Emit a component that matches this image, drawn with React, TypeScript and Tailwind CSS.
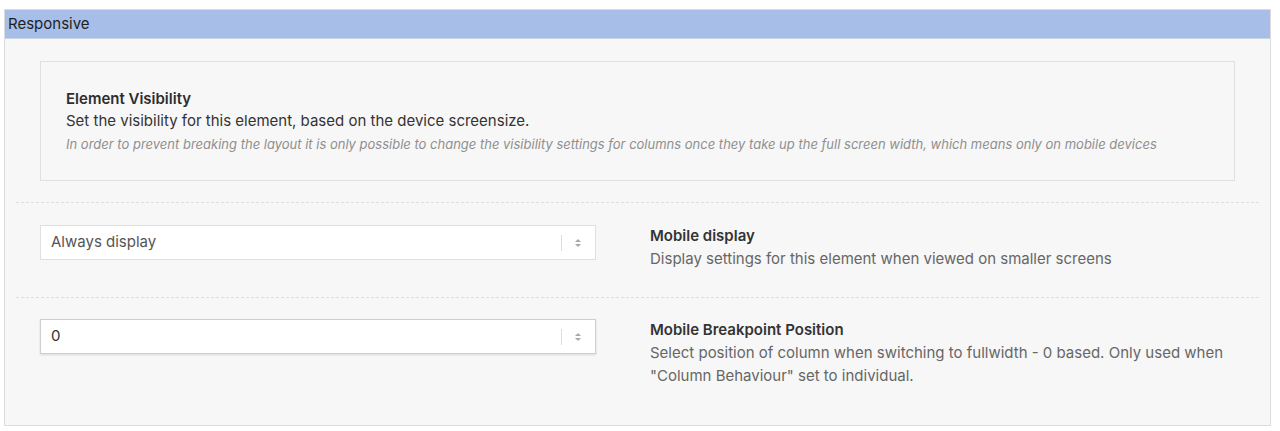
import React from "react";

function Arrows() {
  return (
    <div className="flex items-center h-full">
      <div className="w-px h-[16px] bg-[#dcdcdc]" />
      <svg width="8" height="12" viewBox="0 0 8 12" className="ml-[12px] mr-[13px]">
        <path d="M1 5 L4 2 L7 5 Z" fill="#a8a8a8" />
        <path d="M1 7 L4 10 L7 7 Z" fill="#a8a8a8" />
      </svg>
    </div>
  );
}

export default function App() {
  return (
    <div className="w-[1280px] h-[431px] bg-white pt-[9px] px-[4px]" style={{ fontFamily: 'Inter, "Open Sans", Arial, sans-serif' }}>
      <div className="w-[1267px] border border-[#dcdcdc] bg-[#f7f7f7]">
        <div className="h-[29px] bg-[#a7bfe8] flex items-center pl-[3px] text-[15px] text-[#1e1e1e] border-b border-[#c9d4e4]">
          Responsive
        </div>
        <div className="px-[11px] pt-[22px] pb-[14px]">
          <div className="mx-[24px] border border-[#e0e0e0] h-[120px] pl-[25px] pt-[26px]">
            <div className="text-[15px] font-semibold text-[#2e2e2e] leading-[22px]">Element Visibility</div>
            <div className="text-[15px] text-[#333] leading-[22px]">Set the visibility for this element, based on the device screensize.</div>
            <div className="text-[13px] italic text-[#8f8f8f] leading-[24px]">
              In order to prevent breaking the layout it is only possible to change the visibility settings for columns once they take up the full screen width, which means only on mobile devices
            </div>
          </div>
          <div className="mt-[21px] border-t border-dashed border-[#dedede]" />
          <div className="flex items-start h-[94px] pt-[22px]">
            <div className="ml-[24px] w-[556px] h-[35px] bg-white border border-[#e0e0e0] flex items-center justify-between">
              <span className="pl-[10px] text-[15px] text-[#555]">Always display</span>
              <Arrows />
            </div>
            <div className="ml-[54px]">
              <div className="text-[15px] font-semibold text-[#333] leading-[22px]">Mobile display</div>
              <div className="text-[15px] text-[#666] leading-[23px]">Display settings for this element when viewed on smaller screens</div>
            </div>
          </div>
          <div className="border-t border-dashed border-[#dedede]" />
          <div className="flex items-start pt-[21px] pb-[24px]">
            <div className="ml-[24px] w-[556px] h-[35px] bg-white border border-[#cfcfcf] shadow-[0_1px_2px_rgba(0,0,0,0.12)] flex items-center justify-between">
              <span className="pl-[10px] text-[15px] text-[#333]">0</span>
              <Arrows />
            </div>
            <div className="ml-[54px] w-[590px]">
              <div className="text-[15px] font-semibold text-[#333] leading-[22px]">Mobile Breakpoint Position</div>
              <div className="text-[15px] text-[#666] leading-[23px]">
                Select position of column when switching to fullwidth - 0 based. Only used when "Column Behaviour" set to individual.
              </div>
            </div>
          </div>
        </div>
      </div>
    </div>
  );
}
